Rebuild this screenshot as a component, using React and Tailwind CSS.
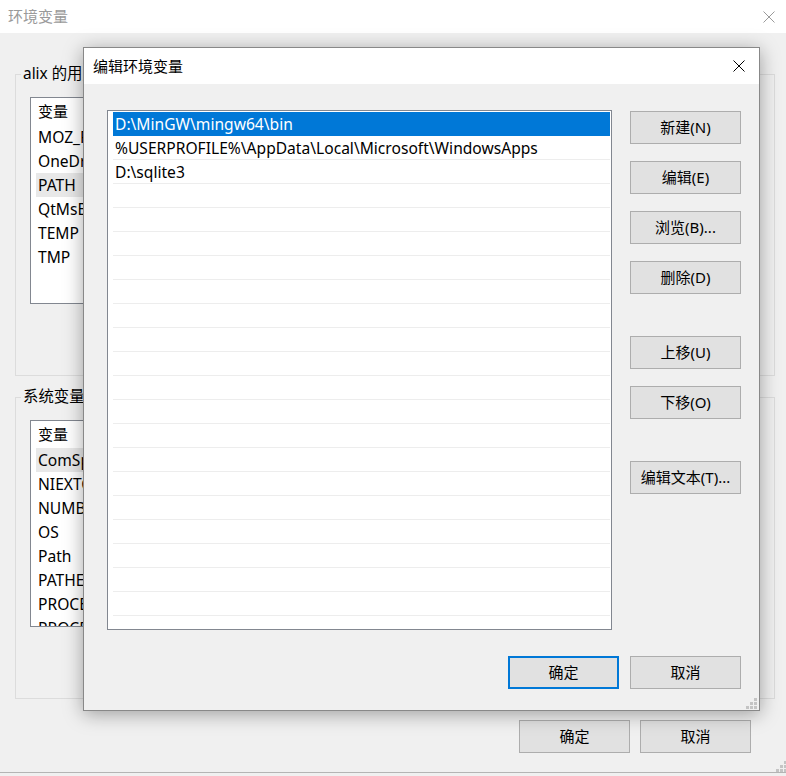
import React from 'react';

const FONT = "font-['Noto_Sans','Noto_Sans_CJK_SC',sans-serif]";

const userVars = ['MOZ_PLUGIN_PATH', 'OneDrive', 'PATH', 'QtMsBuild', 'TEMP', 'TMP'];
const systemVars = [
  'ComSpec',
  'NIEXTCCOMPILERSUPP',
  'NUMBER_OF_PROCESSORS',
  'OS',
  'Path',
  'PATHEXT',
  'PROCESSOR_ARCHITECTURE',
  'PROCESSOR_IDENTIFIER',
];

const pathEntries = [
  'D:\\MinGW\\mingw64\\bin',
  '%USERPROFILE%\\AppData\\Local\\Microsoft\\WindowsApps',
  'D:\\sqlite3',
];

function CloseIcon({ color }) {
  return (
    <svg width="12" height="12" viewBox="0 0 12 12" className="block">
      <path d="M0.5 0.5 L11.5 11.5 M11.5 0.5 L0.5 11.5" stroke={color} strokeWidth="1" fill="none" />
    </svg>
  );
}

function Grip() {
  const dots = [
    [8, 0],
    [4, 4],
    [8, 4],
    [0, 8],
    [4, 8],
    [8, 8],
  ];
  return (
    <svg width="11" height="11" viewBox="0 0 11 11" className="block">
      {dots.map(([x, y]) => (
        <rect key={`${x}-${y}`} x={x} y={y} width="3" height="3" fill="#c4c4c4" />
      ))}
    </svg>
  );
}

function WinButton({ children, primary, className = '' }) {
  return (
    <div
      className={`h-[33px] w-[111px] flex items-center justify-center bg-[#e1e1e1] text-[15px] text-black ${
        primary ? 'border-2 border-[#0078d7]' : 'border border-[#adadad]'
      } ${className}`}
    >
      {children}
    </div>
  );
}

function VarList({ items, active }) {
  return (
    <div className="mx-[14px] mt-[13px] h-[207px] border border-[#828790] bg-white overflow-hidden pl-[5px]">
      <div className="h-[27px] leading-[27px] pl-[2px] text-[15px]">变量</div>
      {items.map((name, i) => (
        <div
          key={name}
          className={`h-[24px] leading-[24px] pl-[2px] text-[15.6px] whitespace-nowrap ${
            i === active ? 'bg-[#e8e8e8]' : ''
          }`}
        >
          {name}
        </div>
      ))}
    </div>
  );
}

function GroupBox({ label, className = '', children }) {
  return (
    <fieldset className={`h-[312px] border border-[#dcdcdc] ${className}`}>
      <legend className="ml-[5px] px-[2px] leading-[20px] text-[15.4px] text-black">{label}</legend>
      {children}
    </fieldset>
  );
}

export default function App() {
  return (
    <div className={`relative w-[786px] h-[776px] overflow-hidden bg-[#f0f0f0] text-black ${FONT}`}>
      {/* background window: 环境变量 */}
      <div className="h-[33px] bg-white flex items-center justify-between pl-2 pr-[11px]">
        <span className="text-[15px] text-[#9a9a9a]">环境变量</span>
        <CloseIcon color="#9a9a9a" />
      </div>
      <div className="h-[740px] border-b border-[#b4b4b4] pl-[15px] pr-[11px] pt-[31px]">
        <GroupBox label="alix 的用户变量">
          <VarList items={userVars} active={2} />
        </GroupBox>
        <GroupBox label="系统变量" className="mt-[11px]">
          <VarList items={systemVars} active={0} />
        </GroupBox>
        <div className="flex justify-end gap-[10px] mt-[21px] pr-[24px]">
          <WinButton>确定</WinButton>
          <WinButton>取消</WinButton>
        </div>
      </div>
      <div className="absolute right-[-1px] bottom-[4px]">
        <Grip />
      </div>

      {/* modal window: 编辑环境变量 */}
      <div className="absolute left-[83px] top-[47px] w-[677px] h-[664px] border border-[#888888] bg-[#f0f0f0] shadow-[0_3px_18px_rgba(0,0,0,0.35)] flex flex-col">
        <div className="h-[36px] bg-white flex items-center justify-between pl-[9px] pr-[14px]">
          <span className="text-[15px]">编辑环境变量</span>
          <CloseIcon color="#000000" />
        </div>
        <div className="relative flex-1 pl-[23px] pr-[18px] pt-[26px]">
          <div className="flex">
            <div className="w-[505px] h-[520px] border border-[#828790] bg-white overflow-hidden pl-[5px] pr-px pt-px">
              {Array.from({ length: 22 }).map((_, i) => {
                const text = pathEntries[i] || '';
                const selected = i === 0;
                return (
                  <div
                    key={i}
                    className={`h-[24px] leading-[25px] pl-[2px] text-[15.6px] whitespace-nowrap border-b ${
                      selected ? 'bg-[#0078d7] border-[#0078d7] text-white' : 'border-[#ededed]'
                    }`}
                  >
                    {text}
                  </div>
                );
              })}
            </div>
            <div className="ml-[18px] mt-px flex flex-col">
              <WinButton>新建(N)</WinButton>
              <WinButton className="mt-[17px]">编辑(E)</WinButton>
              <WinButton className="mt-[17px]">浏览(B)...</WinButton>
              <WinButton className="mt-[17px]">删除(D)</WinButton>
              <WinButton className="mt-[42px]">上移(U)</WinButton>
              <WinButton className="mt-[17px]">下移(O)</WinButton>
              <WinButton className="mt-[42px]">编辑文本(T)...</WinButton>
            </div>
          </div>
          <div className="flex justify-end gap-[11px] mt-[26px]">
            <WinButton primary>确定</WinButton>
            <WinButton>取消</WinButton>
          </div>
          <div className="absolute right-[2px] bottom-[1px]">
            <Grip />
          </div>
        </div>
      </div>
    </div>
  );
}
